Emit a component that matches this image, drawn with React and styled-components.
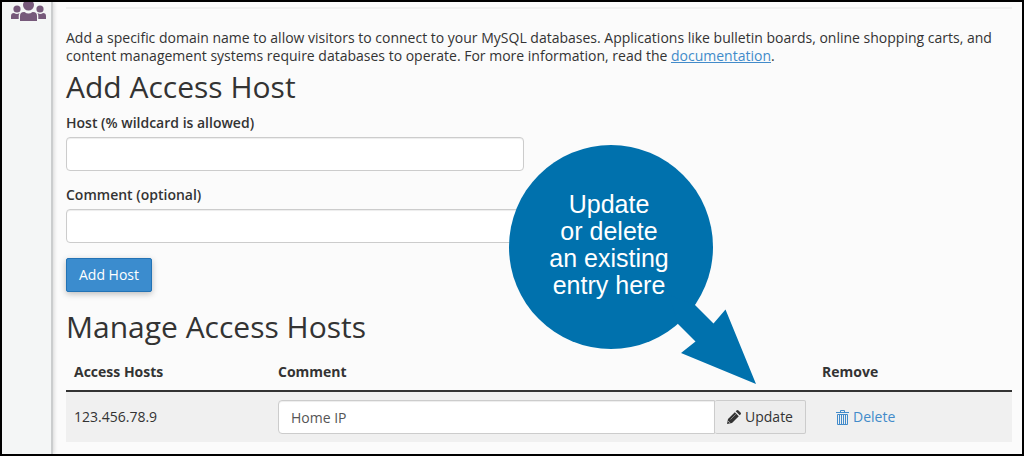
import React from "react";
import styled, { createGlobalStyle } from "styled-components";

const GlobalStyle = createGlobalStyle`
  *, *::before, *::after { box-sizing: border-box; }
  body {
    margin: 0;
    background: #fbfbfb;
    color: #333;
    font: 14px/18px "Open Sans", "Noto Sans", sans-serif;
  }
`;

const Page = styled.div`
  position: relative;
  display: flex;
  min-height: 100vh;
  border: 2px solid #000;
  overflow: hidden;
`;

const Sidebar = styled.nav`
  flex: none;
  width: 51px;
  background: #f4f6f6;
  border-right: 2px solid #cbcdce;
  box-shadow: 1px 0 4px rgba(0, 0, 0, 0.15);
`;

const UsersLink = styled.a`
  display: block;
  height: 20px;
  padding-left: 9px;
  svg { display: block; }
`;

const Main = styled.main`
  flex: 1;
  min-width: 0;
  padding: 5px 10px 12px 13px;
`;

const Divider = styled.hr`
  margin: 0 0 20px;
  border: 0;
  border-top: 2px solid #f0f0f0;
`;

const Intro = styled.p`
  margin: 0;
`;

const DocLink = styled.a`
  color: #428bca;
  text-decoration: underline;
`;

const Heading = styled.h2`
  margin: 0;
  padding: 5px 0 10px;
  font-size: 30px;
  line-height: 34px;
  font-weight: 400;
`;

const Field = styled.div`
  display: flex;
  flex-direction: column;
  width: calc(50% - 15px);
  gap: 5px;
  margin-bottom: 15px;
`;

const Label = styled.label`
  font-weight: 600;
`;

const TextInput = styled.input`
  width: 100%;
  min-width: 0;
  height: 34px;
  padding: 6px 12px;
  border: 1px solid #ccc;
  border-radius: ${(p) => (p.$joined ? "4px 0 0 4px" : "4px")};
  background: #fff;
  box-shadow: inset 0 1px 1px rgba(0, 0, 0, 0.075);
  color: #555;
  font: inherit;
`;

const Button = styled.button`
  display: inline-flex;
  align-items: center;
  justify-content: center;
  flex: none;
  gap: 4px;
  height: 34px;
  padding: 0 13px;
  border: 1px solid transparent;
  border-radius: 2px;
  background: transparent;
  color: #333;
  font: inherit;
  cursor: pointer;
`;

const PrimaryButton = styled(Button)`
  display: flex;
  padding: 0 12px;
  background: #3b8cce;
  border-color: #2373b5;
  color: #fff;
  box-shadow: 0 2px 6px rgba(0, 0, 0, 0.25);
  margin-bottom: 13px;
`;

const UpdateButton = styled(Button)`
  width: 91px;
  padding: 0 12px;
  background: #ededed;
  border-color: #ccc;
  border-left: 0;
`;

const DeleteButton = styled(Button)`
  color: #428bca;
`;

const HostTable = styled.table`
  width: 100%;
  table-layout: fixed;
  border-collapse: separate;
  border-spacing: 0;
`;

const HeadCell = styled.th`
  width: ${(p) => p.$width || "auto"};
  padding: 9px 8px;
  border-bottom: 2px solid #333;
  text-align: left;
  font-weight: 700;
`;

const Cell = styled.td`
  padding: 8px;
  background: #f0f0f0;
  vertical-align: middle;
`;

const InputGroup = styled.div`
  display: flex;
`;

const Callout = styled.div`
  position: absolute;
  left: 507px;
  top: 143px;
  width: 204px;
  height: 204px;
  display: flex;
  align-items: center;
  justify-content: center;
  border-radius: 50%;
  background: #0071ad;
  color: #fff;
  text-align: center;
  font: 25px/27px "Liberation Sans", Arial, sans-serif;
  pointer-events: none;
`;

const CalloutText = styled.span`
  position: relative;
  padding: 0 4px 4px 0;
`;

const Arrow = styled.svg`
  position: absolute;
  left: 160px;
  top: 150px;
`;

const UsersIcon = () => (
  <svg width="36" height="19" viewBox="0 0 36 19" fill="#76597a" aria-hidden="true">
    <circle cx="17.500" cy="3" r="5.500" />
    <circle cx="6" cy="7" r="3.600" />
    <circle cx="29" cy="7" r="3.600" />
    <path d="M9 19v-5q0-4 4-4h.500q4 3 8 0h.500q4 0 4 4v5z" />
    <path d="M0 17v-3q0-3 3-3 3 2 5.500 0-.800 1.500-.800 3v3z" />
    <path d="M27.300 17v-3q0-1.500-.800-3 3 2 5.500 0 3 0 3 3v3z" />
  </svg>
);

const PencilIcon = () => (
  <svg width="14" height="14" viewBox="0 0 14 14" aria-hidden="true">
    <path fill="#333" d="M0 14l1-5 6.800-6.800 4 4L5 13zM8.700 1.300L9.500.500q1-1 2 0l2 2q1 1 0 2l-.800.800z" />
    <path d="M3.500 9.500l5.300-5.300" stroke="#aaa" strokeWidth=".7" />
    <path d="M1.200 11.100l1.700 1.700" stroke="#ddd" strokeWidth=".8" />
  </svg>
);

const TrashIcon = () => (
  <svg width="13" height="15" viewBox="0 0 13 15" fill="none" stroke="currentColor" aria-hidden="true">
    <path d="M0 2.500h13M4.500 2.500v-2h4v2M1.500 4.500h10v10h-10zM3.500 5v9M5.500 5v9M7.500 5v9M9.500 5v9" />
  </svg>
);

export default function App() {
  return (
    <>
      <GlobalStyle />
      <Page>
        <Sidebar>
          <UsersLink href="#users" aria-label="Users">
            <UsersIcon />
          </UsersLink>
        </Sidebar>
        <Main>
          <Divider />
          <Intro>
            Add a specific domain name to allow visitors to connect to your MySQL databases.
            Applications like bulletin boards, online shopping carts, and content management
            systems require databases to operate. For more information, read the{" "}
            <DocLink href="#documentation">documentation</DocLink>.
          </Intro>
          <Heading>Add Access Host</Heading>
          <form onSubmit={(e) => e.preventDefault()}>
            <Field>
              <Label htmlFor="host">Host (% wildcard is allowed)</Label>
              <TextInput id="host" type="text" />
            </Field>
            <Field>
              <Label htmlFor="comment">Comment (optional)</Label>
              <TextInput id="comment" type="text" />
            </Field>
            <PrimaryButton type="submit">Add Host</PrimaryButton>
          </form>
          <Heading>Manage Access Hosts</Heading>
          <HostTable>
            <thead>
              <tr>
                <HeadCell $width="204px">Access Hosts</HeadCell>
                <HeadCell>Comment</HeadCell>
                <HeadCell $width="198px">Remove</HeadCell>
              </tr>
            </thead>
            <tbody>
              <tr>
                <Cell>123.456.78.9</Cell>
                <Cell>
                  <InputGroup>
                    <TextInput $joined type="text" defaultValue="Home IP" aria-label="Comment for 123.456.78.9" />
                    <UpdateButton type="button">
                      <PencilIcon />
                      Update
                    </UpdateButton>
                  </InputGroup>
                </Cell>
                <Cell>
                  <DeleteButton type="button">
                    <TrashIcon />
                    Delete
                  </DeleteButton>
                </Cell>
              </tr>
            </tbody>
          </HostTable>
        </Main>
        <Callout>
          <Arrow width="90" height="92" viewBox="0 0 90 92" fill="#0071ad" aria-hidden="true">
            <path d="M0 0L26 10 44.500 28.500 56.500 14.500 87 89 12 58 26.500 46.500 9 29z" />
          </Arrow>
          <CalloutText>
            Update
            <br />
            or delete
            <br />
            an existing
            <br />
            entry here
          </CalloutText>
        </Callout>
      </Page>
    </>
  );
}
